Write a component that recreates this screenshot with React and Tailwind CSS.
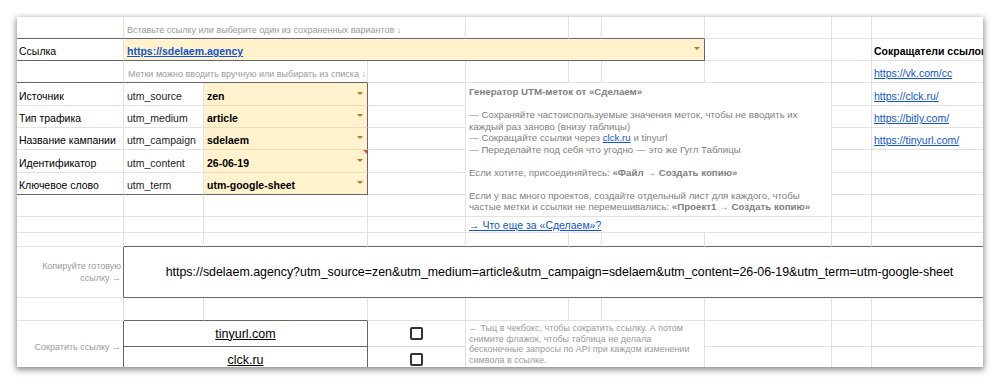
import clsx from "clsx"

const RC = {
    l: "border-r-[#e2e2e2]",
    d: "border-r-[#666]",
    y: "border-r-[#eadfbf]",
}
const BC = {
    l: "border-b-[#e2e2e2]",
    d: "border-b-[#666]",
    y: "border-b-[#eadfbf]",
}

const Cell = ({ span = "", r = "l", b = "l", className = "", children }) => (
    <div className={clsx("relative min-w-0 overflow-hidden border-r border-b", RC[r], BC[b], span, className)}>
        {children}
    </div>
)

const Arrow = () => (
    <svg width="6" height="3" viewBox="0 0 6 3" className="shrink-0 mb-[7px] mr-[4px]">
        <polygon points="0,0 6,0 3,3" fill="#a9801c" />
    </svg>
)

const utms = [
    ["Источник", "utm_source", "zen"],
    ["Тип трафика", "utm_medium", "article"],
    ["Название кампании", "utm_campaign", "sdelaem"],
    ["Идентификатор", "utm_content", "26-06-19"],
    ["Ключевое слово", "utm_term", "utm-google-sheet"],
]

const shorteners = ["https://clck.ru/", "https://bitly.com/", "https://tinyurl.com/"]

const LinkCell = ({ href }) => (
    <Cell className="flex items-end pl-[2px] pb-[3px]">
        <span className="text-[10.5px] leading-[12px] text-[#1155cc] underline whitespace-nowrap">{href}</span>
    </Cell>
)

const Checkbox = () => (
    <Cell className="flex items-center justify-center">
        <div className="w-[13px] h-[13px] border-2 border-[#333] rounded-[2px]" />
    </Cell>
)

export default function App() {
    return (
        <div className="w-[1000px] h-[385px] bg-white pt-[17px] pl-[17px] overflow-hidden font-['Liberation_Sans',Arial,sans-serif] text-black">
            <div className="w-[966px] h-[350px] overflow-hidden bg-white shadow-[0_2px_6px_1px_rgba(0,0,0,0.45)]">
                <div className="grid grid-cols-[107px_80px_164px_98px_103px_33px_103px_127px_40px_140px] grid-rows-[22px_22px_22px_23px_22px_22px_23px_22px_22px_16px_14px_51px_23px_26px_26px]">
                    {/* row 1 */}
                    <Cell b="d" />
                    <Cell span="col-span-3" b="d" className="flex items-end pl-[3px] pb-[2px]">
                        <span className="text-[9px] leading-[11px] text-[#9a9a9a] whitespace-nowrap">
                            Вставьте ссылку или выберите один из сохраненных вариантов ↓
                        </span>
                    </Cell>
                    <Cell b="d" />
                    <Cell b="d" />
                    <Cell b="d" />
                    <Cell />
                    <Cell />
                    <Cell />

                    {/* row 2 */}
                    <Cell b="d" className="flex items-end pl-[2px] pb-[3px]">
                        <span className="text-[10.5px] leading-[12px]">Ссылка</span>
                    </Cell>
                    <Cell span="col-span-6" r="d" b="d" className="flex items-end justify-between bg-[#fff2cc] pl-[3px] pb-[3px]">
                        <span className="text-[10.5px] leading-[12px] font-bold text-[#1155cc] underline">https://sdelaem.agency</span>
                        <Arrow />
                    </Cell>
                    <Cell />
                    <Cell />
                    <Cell className="flex items-end pl-[2px] pb-[3px]">
                        <span className="text-[10.5px] leading-[12px] font-bold whitespace-nowrap">Сокращатели ссылок</span>
                    </Cell>

                    {/* row 3 */}
                    <Cell b="d" />
                    <Cell span="col-span-2" b="d" className="flex items-end justify-end pr-[1px] pb-[2px]">
                        <span className="text-[9px] leading-[11px] text-[#9a9a9a] whitespace-nowrap">
                            Метки можно вводить вручную или выбирать из списка ↓
                        </span>
                    </Cell>
                    <Cell />
                    <Cell />
                    <Cell />
                    <Cell />
                    <Cell />
                    <Cell />
                    <LinkCell href="https://vk.com/cc" />

                    {/* rows 4-8 */}
                    {utms.map(([label, key, value], i) => {
                        const last = i === utms.length - 1
                        return [
                            <Cell key={`a${i}`} b={last ? "d" : "l"} className="flex items-end pl-[2px] pb-[3px]">
                                <span className="text-[10.5px] leading-[12px] whitespace-nowrap">{label}</span>
                            </Cell>,
                            <Cell key={`b${i}`} b={last ? "d" : "l"} className="flex items-end pl-[3px] pb-[3px]">
                                <span className="text-[10.5px] leading-[12px] text-[#222] whitespace-nowrap">{key}</span>
                            </Cell>,
                            <Cell key={`c${i}`} r="d" b={last ? "d" : "y"} className="flex items-end justify-between bg-[#fff2cc] pl-[3px] pb-[3px]">
                                <span className="text-[10.5px] leading-[12px] font-bold whitespace-nowrap">{value}</span>
                                <Arrow />
                                {i === 3 && (
                                    <svg width="4" height="4" viewBox="0 0 4 4" className="absolute top-0 right-0">
                                        <polygon points="0,0 4,0 4,4" fill="#e8442a" />
                                    </svg>
                                )}
                            </Cell>,
                            <Cell key={`d${i}`} />,
                            i === 0 ? (
                                <Cell key="info" span="col-span-4 row-span-6" className="pl-[3px] pt-[3px]">
                                    <div className="text-[9.7px] leading-[11.5px] text-[#808080] whitespace-nowrap">
                                        <div className="font-bold">Генератор UTM-меток от «Сделаем»</div>
                                        <div>&nbsp;</div>
                                        <div>— Сохраняйте частоиспользуемые значения меток, чтобы не вводить их</div>
                                        <div>каждый раз заново (внизу таблицы)</div>
                                        <div>
                                            — Сокращайте ссылки через <span className="text-[#1155cc] underline">clck.ru</span> и tinyurl
                                        </div>
                                        <div>— Переделайте под себя что угодно — это же Гугл Таблицы</div>
                                        <div>&nbsp;</div>
                                        <div>
                                            Если хотите, присоединяйтесь: <span className="font-bold">«Файл → Создать копию»</span>
                                        </div>
                                        <div>&nbsp;</div>
                                        <div>Если у вас много проектов, создайте отдельный лист для каждого, чтобы</div>
                                        <div>
                                            частые метки и ссылки не перемешивались: <span className="font-bold">«Проект1 → Создать копию»</span>
                                        </div>
                                    </div>
                                </Cell>
                            ) : null,
                            <Cell key={`i${i}`} />,
                            i < 3 ? <LinkCell key={`j${i}`} href={shorteners[i]} /> : <Cell key={`j${i}`} />,
                        ]
                    })}

                    {/* row 9 */}
                    <Cell />
                    <Cell />
                    <Cell />
                    <Cell />
                    <Cell />
                    <Cell />

                    {/* row 10 */}
                    <Cell />
                    <Cell />
                    <Cell />
                    <Cell />
                    <Cell span="col-span-4" className="flex items-end pl-[3px] pb-[1px]">
                        <span className="text-[10.5px] leading-[12px] text-[#1155cc] underline whitespace-nowrap">
                            → Что еще за «Сделаем»?
                        </span>
                    </Cell>
                    <Cell />
                    <Cell />

                    {/* row 11 */}
                    <Cell />
                    <Cell b="d" />
                    <Cell b="d" />
                    <Cell b="d" />
                    <Cell b="d" />
                    <Cell b="d" />
                    <Cell b="d" />
                    <Cell b="d" />
                    <Cell b="d" />
                    <Cell b="d" />

                    {/* row 12 */}
                    <Cell r="d" className="flex items-center justify-end pr-[2px]">
                        <span className="text-[9px] leading-[12px] text-[#9a9a9a] text-right">
                            Копируйте готовую
                            <br />
                            ссылку →
                        </span>
                    </Cell>
                    <Cell span="col-span-9" b="d" className="flex items-center justify-center pr-[16px]">
                        <span className="text-[12.4px] leading-[15px] whitespace-nowrap">
                            https://sdelaem.agency?utm_source=zen&utm_medium=article&utm_campaign=sdelaem&utm_content=26-06-19&utm_term=utm-google-sheet
                        </span>
                    </Cell>

                    {/* row 13 */}
                    <Cell />
                    <Cell b="d" />
                    <Cell b="d" />
                    <Cell />
                    <Cell />
                    <Cell />
                    <Cell />
                    <Cell />
                    <Cell />
                    <Cell />

                    {/* row 14 */}
                    <Cell span="row-span-2" r="d" className="flex items-center justify-end pr-[2px]">
                        <span className="text-[9px] leading-[12px] text-[#9a9a9a] whitespace-nowrap">Сократить ссылку →</span>
                    </Cell>
                    <Cell span="col-span-2" r="d" b="d" className="flex items-center justify-center">
                        <span className="text-[12.5px] leading-[14px] underline">tinyurl.com</span>
                    </Cell>
                    <Checkbox />
                    <Cell span="col-span-3 row-span-2" className="pl-[3px] pt-[2px]">
                        <div className="text-[9px] leading-[10.7px] text-[#9a9a9a] whitespace-nowrap">
                            <div>← Тыц в чекбокс, чтобы сократить ссылку. А потом</div>
                            <div>снимите флажок, чтобы таблица не делала</div>
                            <div>бесконечные запросы по API при каждом изменении</div>
                            <div>символа в ссылке.</div>
                        </div>
                    </Cell>
                    <Cell />
                    <Cell />
                    <Cell />

                    {/* row 15 */}
                    <Cell span="col-span-2" r="d" className="flex items-center justify-center">
                        <span className="text-[12.5px] leading-[14px] underline">clck.ru</span>
                    </Cell>
                    <Checkbox />
                    <Cell />
                    <Cell />
                    <Cell />
                </div>
            </div>
        </div>
    )
}
